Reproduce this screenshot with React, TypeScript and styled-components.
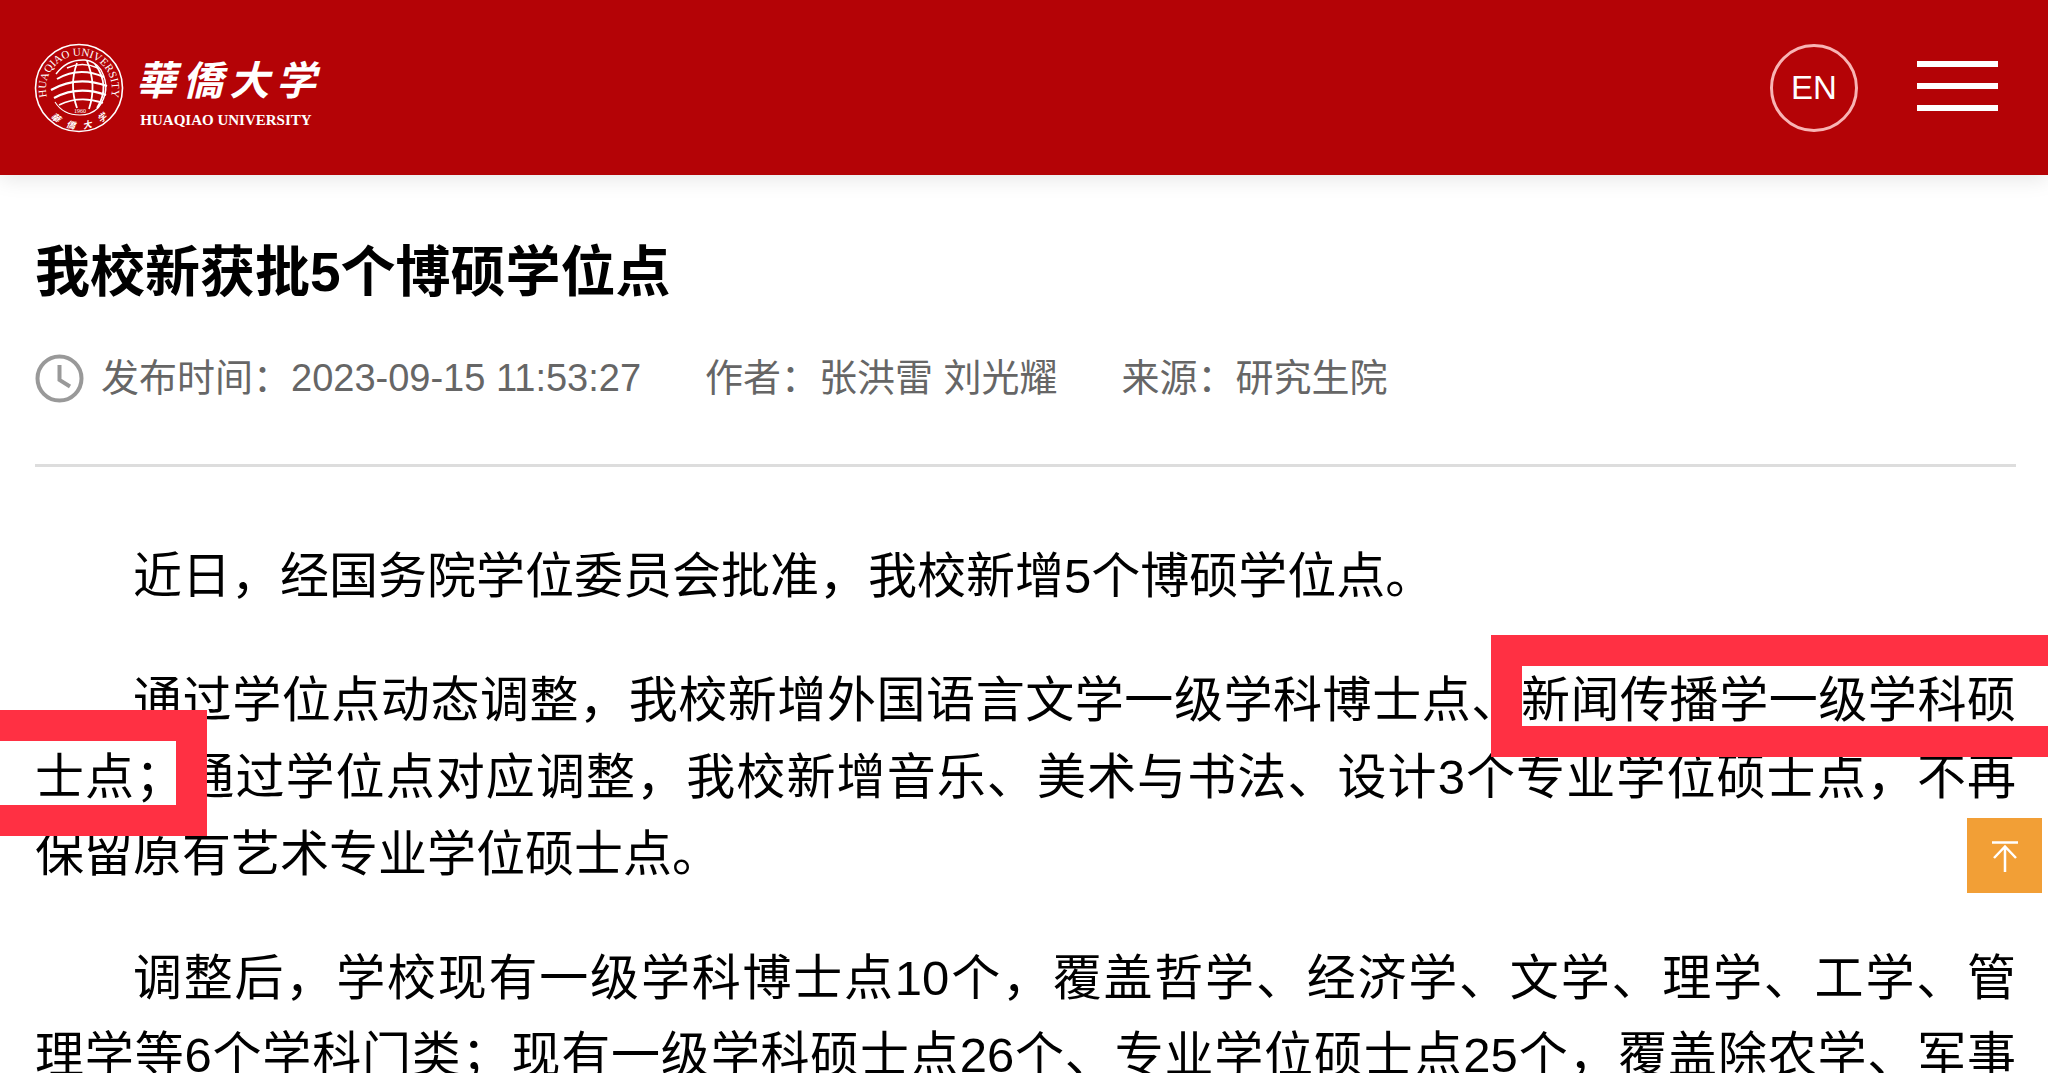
import React from "react";
import styled, { createGlobalStyle } from "styled-components";

const GlobalStyle = createGlobalStyle`
  * { box-sizing: border-box; }
  body {
    margin: 0;
    background: #fff;
    color: #000;
    font-family: "Liberation Sans", "Noto Sans CJK SC", sans-serif;
    overflow-x: hidden;
  }
`;

const Header = styled.header`
  display: flex;
  align-items: center;
  justify-content: space-between;
  height: 175px;
  padding: 0 50px 0 34px;
  background: #b40306;
  box-shadow: 0 4px 20px rgba(0, 0, 0, 0.1);
`;

const Brand = styled.a`
  display: flex;
  align-items: center;
  gap: 12px;
  color: #fff;
  text-decoration: none;
`;

const Seal = styled.svg`
  width: 90px;
  height: 90px;
  flex: none;
`;

const Wordmark = styled.span`
  display: flex;
  flex-direction: column;
  align-items: center;
`;

const ChineseName = styled.span`
  display: flex;
  justify-content: space-between;
  width: 180px;
  font: italic 700 40px/64px "Noto Sans CJK TC", sans-serif;
`;

const EnglishName = styled.span`
  font: 700 15px/20px "Liberation Serif", serif;
`;

const Actions = styled.nav`
  display: flex;
  align-items: center;
  gap: 59px;
`;

const LanguageLink = styled.a`
  display: flex;
  align-items: center;
  justify-content: center;
  width: 88px;
  height: 88px;
  border: 3px solid #f8b4b4;
  border-radius: 50%;
  color: #fff;
  font-size: 33px;
  line-height: 40px;
  text-decoration: none;
`;

const MenuButton = styled.button`
  display: flex;
  flex-direction: column;
  gap: 16px;
  width: 81px;
  padding: 0 0 4px;
  border: 0;
  background: none;
  cursor: pointer;
`;

const MenuBar = styled.span`
  height: 6px;
  background: #fff;
`;

const Article = styled.article`
  padding: 57px 32px 0 35px;
`;

const Title = styled.h1`
  margin: 0;
  font-size: 55px;
  line-height: 80px;
  font-weight: 700;
`;

const Meta = styled.div`
  display: flex;
  align-items: center;
  gap: 64px;
  padding: 36px 0 56px;
  border-bottom: 3px solid #ddd;
  color: #666;
  font-size: 38px;
  line-height: 60px;
`;

const MetaItem = styled.span`
  display: flex;
  align-items: center;
  gap: 17px;
  white-space: nowrap;
`;

const ClockIcon = styled.svg`
  width: 49px;
  height: 49px;
  flex: none;
`;

const Body = styled.div`
  padding-top: 71px;
`;

const Paragraph = styled.p<{ $continues?: boolean }>`
  position: relative;
  margin: 0 0 47px;
  font-size: 49px;
  line-height: 77px;
  text-indent: 2em;
  text-align: justify;
  text-align-last: ${(p) => (p.$continues ? "justify" : "auto")};
`;

const KeepTogether = styled.span`
  white-space: nowrap;
`;

const Mark = styled.span<{ $side: "left" | "right" }>`
  position: absolute;
  border: 31px solid #ff3043;
  pointer-events: none;
  ${(p) =>
    p.$side === "right"
      ? "top: -27px; right: -32px; width: 557px; height: 122px; border-right: 0;"
      : "top: 48px; left: -35px; width: 207px; height: 126px; border-left: 0;"}
`;

const TopButton = styled.button`
  position: fixed;
  right: 6px;
  bottom: 180px;
  display: flex;
  align-items: center;
  justify-content: center;
  width: 75px;
  height: 75px;
  padding: 0;
  border: 0;
  background: #f29f36;
  cursor: pointer;
`;

function UniversitySeal() {
  return (
    <Seal viewBox="0 0 90 90" fill="none" stroke="#fff" aria-hidden="true">
      <defs>
        <path id="sealTop" d="M14 57 A33 33 0 1 1 76 57" />
        <path id="sealBottom" d="M4 45 A41 41 0 0 0 86 45" />
      </defs>
      <circle cx="45" cy="45" r="43.5" strokeWidth="1.6" />
      <text fill="#fff" stroke="none" fontFamily="Liberation Serif, serif" fontSize="11">
        <textPath href="#sealTop" startOffset="50%" textAnchor="middle">
          HUAQIAO UNIVERSITY
        </textPath>
      </text>
      <text
        fill="#fff"
        stroke="none"
        fontFamily="Noto Sans CJK TC, sans-serif"
        fontStyle="italic"
        fontWeight="700"
        fontSize="9"
      >
        <textPath href="#sealBottom" startOffset="50%" textAnchor="middle">
          {"華\u2003僑\u2003大\u2003学"}
        </textPath>
      </text>
      <path d="M22 31 Q33 16 51 17 Q61 18 67 27 Q78 47 64 65" strokeWidth="1.4" />
      <path d="M21 59 Q29 72 46 72 Q57 72 64 65" strokeWidth="1.1" />
      <path d="M43 20 Q35 42 43 65" strokeWidth="1.8" />
      <path d="M53 18 Q63 42 55 66" strokeWidth="1.8" />
      <path d="M61 21 Q77 43 63 65" strokeWidth="1.8" />
      <path d="M33 25 Q48 18 64 25" strokeWidth="1.5" />
      <path d="M23 36 Q45 23 70 34" strokeWidth="2" />
      <path d="M17 47 Q43 32 73 43" strokeWidth="2.2" />
      <path d="M20 55 Q44 42 72 52" strokeWidth="2.2" />
      <path d="M25 62 Q46 52 69 60" strokeWidth="1.8" />
      <text x="46" y="70" fill="#fff" stroke="none" fontFamily="Liberation Serif, serif" fontSize="6" textAnchor="middle">
        1960
      </text>
    </Seal>
  );
}

export default function App() {
  return (
    <>
      <GlobalStyle />
      <Header>
        <Brand href="#">
          <UniversitySeal />
          <Wordmark>
            <ChineseName>
              <span>華</span>
              <span>僑</span>
              <span>大</span>
              <span>学</span>
            </ChineseName>
            <EnglishName>HUAQIAO UNIVERSITY</EnglishName>
          </Wordmark>
        </Brand>
        <Actions>
          <LanguageLink href="#">EN</LanguageLink>
          <MenuButton type="button" aria-label="菜单">
            <MenuBar />
            <MenuBar />
            <MenuBar />
          </MenuButton>
        </Actions>
      </Header>
      <Article>
        <Title>我校新获批5个博硕学位点</Title>
        <Meta>
          <MetaItem>
            <ClockIcon viewBox="0 0 49 49" fill="none" stroke="#999" strokeWidth="4" aria-hidden="true">
              <circle cx="24.500" cy="24.500" r="22" />
              <path d="M24.500 11 V26 L35 32.500" />
            </ClockIcon>
            <span>发布时间：2023-09-15 11:53:27</span>
          </MetaItem>
          <MetaItem>作者：张洪雷 刘光耀</MetaItem>
          <MetaItem>来源：研究生院</MetaItem>
        </Meta>
        <Body>
          <Paragraph>近日，经国务院学位委员会批准，我校新增5个博硕学位点。</Paragraph>
          <Paragraph>
            通过学位点动态调整，我校新增外国语言文学一级学科博士点、新闻传播学一级学科硕士点；通过学位点对应调整，我校新增音乐、美术与书法、设计3个专业学位硕士点，不再保留原有艺术专业学位硕士点。
            <Mark $side="right" />
            <Mark $side="left" />
          </Paragraph>
          <Paragraph $continues>
            调整后，学校现有一级学科博士点10个，覆盖哲学、经济学、文学、理学、工学、管
            <KeepTogether>理学</KeepTogether>
            等6个学科门类；现有一级学科硕士点26个、专业学位硕士点25个，覆盖除农学、军事
          </Paragraph>
        </Body>
      </Article>
      <TopButton type="button" aria-label="返回顶部">
        <svg width="30" height="32" viewBox="0 0 30 32" fill="none" stroke="#fff" strokeWidth="2.500" aria-hidden="true">
          <path d="M2 2.500 H28 M15 6 V32 M4 18 L15 6.500 L26 18" />
        </svg>
      </TopButton>
    </>
  );
}
